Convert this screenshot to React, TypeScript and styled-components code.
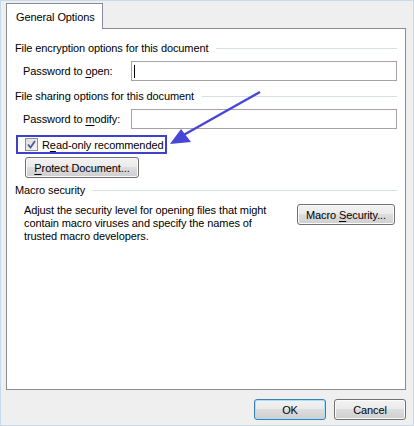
import React from "react";
import styled, { createGlobalStyle } from "styled-components";

const Global = createGlobalStyle`
  html, body { margin: 0; padding: 0; background: #efefef; }
  body { font-family: "Liberation Sans", Arial, sans-serif; font-size: 11px; letter-spacing: -0.1px; color: #000; }
  * { box-sizing: border-box; }
`;

const Window = styled.div`
  position: relative;
  width: 414px;
  height: 426px;
  border: 1px solid #c8dbee;
  background: #efefef;
  padding: 2px 7px 0 5px;
  display: flex;
  flex-direction: column;
`;

const TabStrip = styled.div`
  display: flex;
  height: 26px;
  position: relative;
  z-index: 1;
`;

const Tab = styled.div`
  width: 97px;
  height: 26px;
  background: #fff;
  border: 1px solid #898c95;
  border-bottom: none;
  padding: 1px 0 0 9px;
  display: flex;
  align-items: center;
  line-height: 16px;
  white-space: nowrap;
`;

const Panel = styled.div`
  height: 362px;
  margin-top: -1px;
  background: #fff;
  border: 1px solid #898c95;
  padding: 11px 8px 0 8px;
  display: flex;
  flex-direction: column;
`;

const Heading = styled.div<{ $gap: number }>`
  margin-top: ${(p) => p.$gap}px;
  height: 16px;
  display: flex;
  align-items: center;
  gap: 8px;
  line-height: 16px;
  white-space: nowrap;
  &::after {
    content: "";
    flex: 1;
    height: 1px;
    background: #d5dfe5;
  }
`;

const FieldRow = styled.div<{ $gap: number }>`
  margin-top: ${(p) => p.$gap}px;
  height: 20px;
  display: flex;
  align-items: center;
  padding-left: 8px;
`;

const FieldLabel = styled.div`
  width: 108px;
  white-space: nowrap;
  line-height: 16px;
`;

const TextBox = styled.div<{ $caret?: boolean }>`
  flex: 1;
  height: 20px;
  border: 1px solid #a3a3a3;
  background: #fff;
  display: flex;
  align-items: center;
  padding-left: 2px;
  &::before {
    content: "";
    display: ${(p) => (p.$caret ? "block" : "none")};
    width: 1px;
    height: 13px;
    background: #000;
  }
`;

const U = styled.span`
  text-decoration: underline;
  text-underline-offset: 2px;
`;

const Highlight = styled.div`
  margin-top: 6px;
  margin-left: 1px;
  width: 151px;
  height: 19px;
  border: 2px solid #3c40cc;
  display: flex;
  align-items: center;
  padding-left: 7px;
  gap: 4px;
  white-space: nowrap;
`;

const CheckBox = styled.div`
  width: 13px;
  height: 13px;
  border: 1px solid #8e8f8f;
  background: linear-gradient(135deg, #dcdcdc, #f6f6f6);
  display: flex;
  align-items: center;
  justify-content: center;
`;

const Button = styled.div<{ $w: number; $default?: boolean }>`
  width: ${(p) => p.$w}px;
  height: 21px;
  border: 1px solid ${(p) => (p.$default ? "#3c7fb1" : "#707070")};
  border-radius: 3px;
  background: linear-gradient(#f2f2f2 0%, #ebebeb 45%, #dddddd 50%, #cfcfcf 100%);
  box-shadow: inset 0 0 0 1px ${(p) => (p.$default ? "#a8e0f6" : "#fbfbfb")};
  display: flex;
  align-items: center;
  justify-content: center;
  line-height: 16px;
  white-space: nowrap;
  flex: none;
`;

const ProtectWrap = styled.div`
  margin-top: 3px;
  padding-left: 10px;
`;

const MacroRow = styled.div`
  margin-top: 6px;
  display: flex;
  justify-content: space-between;
  align-items: flex-start;
  padding-left: 9px;
  padding-right: 2px;
`;

const Para = styled.div`
  line-height: 13px;
  white-space: nowrap;
`;

const Footer = styled.div`
  display: flex;
  justify-content: flex-end;
  gap: 8px;
  padding-top: 9px;
  padding-right: 0px;
`;

const Overlay = styled.svg`
  position: absolute;
  left: -1px;
  top: -1px;
  pointer-events: none;
`;

export default function App() {
  return (
    <>
      <Global />
      <Window>
        <TabStrip>
          <Tab>General Options</Tab>
        </TabStrip>
        <Panel>
          <Heading $gap={0}>File encryption options for this document</Heading>
          <FieldRow $gap={5}>
            <FieldLabel>
              Password to <U>o</U>pen:
            </FieldLabel>
            <TextBox $caret />
          </FieldRow>
          <Heading $gap={7}>File sharing options for this document</Heading>
          <FieldRow $gap={5}>
            <FieldLabel>
              Password to <U>m</U>odify:
            </FieldLabel>
            <TextBox />
          </FieldRow>
          <Highlight>
            <CheckBox>
              <svg width="9" height="9" viewBox="0 0 9 9">
                <path d="M1 4.5 L3.5 7.5 L8 1" fill="none" stroke="#4a5d95" strokeWidth="1.8" />
              </svg>
            </CheckBox>
            <span>
              R<U>e</U>ad-only recommended
            </span>
          </Highlight>
          <ProtectWrap>
            <Button $w={114}>
              <span>
                <U>P</U>rotect Document...
              </span>
            </Button>
          </ProtectWrap>
          <Heading $gap={4}>Macro security</Heading>
          <MacroRow>
            <Para>
              Adjust the security level for opening files that might
              <br />
              contain macro viruses and specify the names of
              <br />
              trusted macro developers.
            </Para>
            <Button $w={98}>
              <span>
                Macro <U>S</U>ecurity...
              </span>
            </Button>
          </MacroRow>
        </Panel>
        <Footer>
          <Button $w={72} $default>
            OK
          </Button>
          <Button $w={72}>Cancel</Button>
        </Footer>
        <Overlay width="414" height="426" viewBox="0 0 414 426">
          <line x1="260" y1="92" x2="180" y2="137" stroke="#4747d6" strokeWidth="2.5" />
          <polygon points="170,144 181,129 191,142" fill="#4747d6" />
        </Overlay>
      </Window>
    </>
  );
}
